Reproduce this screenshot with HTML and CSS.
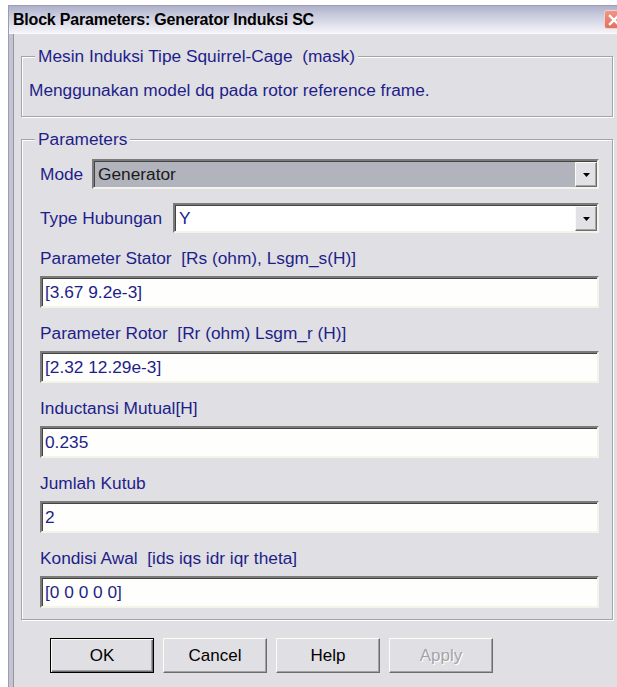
FILE: index.html
```html
<!DOCTYPE html>
<html lang="id">
<head>
<meta charset="utf-8">
<title>Block Parameters: Generator Induksi SC</title>
<link rel="stylesheet" href="styles.css">
</head>
<body>
<div class="window">
  <div class="titlebar">
    <span class="title">Block Parameters: Generator Induksi SC</span>
    <span class="close" aria-label="Close">
      <svg viewBox="0 0 12 12" width="12" height="12"><path d="M2 2 L10 10 M10 2 L2 10" stroke="#fff" stroke-width="2.4" stroke-linecap="square"/></svg>
    </span>
  </div>
  <div class="client">
    <fieldset class="group">
      <legend>Mesin Induksi Tipe Squirrel-Cage&nbsp; (mask)</legend>
      <p class="desc">Menggunakan model dq pada rotor reference frame.</p>
    </fieldset>

    <fieldset class="group params">
      <legend>Parameters</legend>
      <div class="rows">
        <div class="combo-row">
          <label class="combo-label mode-label">Mode</label>
          <div class="combo combo-grey">
            <span class="combo-text">Generator</span>
            <span class="drop"><svg viewBox="0 0 7 4" width="7" height="4"><path d="M0 0 H7 L3.5 4 Z" fill="#000"/></svg></span>
          </div>
        </div>
        <div class="combo-row">
          <label class="combo-label type-label">Type Hubungan</label>
          <div class="combo">
            <span class="combo-text value">Y</span>
            <span class="drop"><svg viewBox="0 0 7 4" width="7" height="4"><path d="M0 0 H7 L3.5 4 Z" fill="#000"/></svg></span>
          </div>
        </div>

        <div class="field">
          <label>Parameter Stator&nbsp; [Rs (ohm), Lsgm_s(H)]</label>
          <div class="edit">[3.67 9.2e-3]</div>
        </div>
        <div class="field">
          <label>Parameter Rotor&nbsp; [Rr (ohm) Lsgm_r (H)]</label>
          <div class="edit">[2.32 12.29e-3]</div>
        </div>
        <div class="field">
          <label>Inductansi Mutual[H]</label>
          <div class="edit">0.235</div>
        </div>
        <div class="field">
          <label>Jumlah Kutub</label>
          <div class="edit">2</div>
        </div>
        <div class="field">
          <label>Kondisi Awal&nbsp; [ids iqs idr iqr theta]</label>
          <div class="edit">[0 0 0 0 0]</div>
        </div>
      </div>
    </fieldset>

    <div class="buttons">
      <button class="btn btn-default">OK</button>
      <button class="btn">Cancel</button>
      <button class="btn">Help</button>
      <button class="btn" disabled>Apply</button>
    </div>
  </div>
</div>
</body>
</html>
```

FILE: styles.css
```css
html, body {
  margin: 0;
  height: 100%;
}

body {
  background: #ffffff;
  overflow: hidden;
  font-family: "Liberation Sans", Arial, sans-serif;
  font-size: 17.3px;
  color: #1e1e8a;
}

/* window frame */
.window {
  margin: 5px 0 0 8px;
  height: 682px;
  border-top: 1px solid #9c9cb2;
  border-left: 1px solid #9c9cb2;
  display: flex;
  flex-direction: column;
}

.titlebar {
  height: 27px;
  flex: none;
  padding-left: 4px;
  display: flex;
  align-items: center;
  justify-content: space-between;
  background: linear-gradient(#aeb0ca, #cdcfe0 40%, #f4f4f8);
  border-bottom: 1px solid #fbfbfd;
}

.title {
  font-weight: bold;
  font-size: 16px;
  color: #000;
  letter-spacing: -0.2px;
  padding-top: 1px;
}

.close {
  width: 18px;
  height: 17px;
  margin-right: -7px;
  border: 1px solid #f7cdc6;
  border-radius: 3px;
  background: linear-gradient(#ee9589, #e2705f);
  display: flex;
  align-items: center;
  justify-content: center;
}

.client {
  flex: 1;
  background: #e0dfe3;
  border-left: 4px solid #c4c4d0;
  box-shadow: inset 1px 0 0 #9494a6;
  padding: 12px 4px 0 8px;
}

/* etched group boxes */
.group {
  margin: 0;
  min-width: 0;
  padding: 0 7px 16px;
  border: 1px solid #a3a3ab;
  box-shadow: inset 1px 1px 0 #fff, 1px 1px 0 #fff;
}

.group legend {
  margin-left: 6px;
  padding: 0 3px;
  line-height: 20px;
  background: #e0dfe3;
}

.desc {
  margin: 14px 0 0;
  line-height: 20px;
}

.params {
  margin-top: 12px;
  padding-bottom: 11px;
}

.rows {
  padding: 0 6px 0 11px;
}

/* combo boxes */
.combo-row {
  display: flex;
  align-items: center;
  height: 30px;
  margin-top: 10px;
}

.combo-row + .combo-row {
  margin-top: 14px;
}

.combo-label {
  flex: none;
}

.mode-label { width: 52px; }
.type-label { width: 133px; }

.combo {
  flex: 1;
  height: 30px;
  box-sizing: border-box;
  display: flex;
  align-items: stretch;
  background: #fff;
  border: 2px solid;
  border-color: #7b7b7b #f4f4ec #f4f4ec #7b7b7b;
  box-shadow: inset 1px 1px 0 #444;
}

.combo-grey {
  background: #b1b3bd;
}

.combo-text {
  flex: 1;
  display: flex;
  align-items: center;
  padding-left: 4px;
  color: #1a1a1a;
}

.combo-text.value {
  color: #1e1e8a;
}

.drop {
  width: 20px;
  flex: none;
  margin: 1px 0 0;
  display: flex;
  align-items: center;
  justify-content: center;
  background: #e2e1e5;
  border: 1px solid;
  border-color: #fafaf4 #6e6e6e #6e6e6e #fafaf4;
  box-shadow: inset -1px -1px 0 #a4a4a4;
}

/* labelled edit fields */
.field {
  margin-top: 14px;
}

.combo-row + .field {
  margin-top: 14px;
}

.field label {
  display: block;
  line-height: 22px;
}

.edit {
  margin-top: 7px;
  height: 32px;
  box-sizing: border-box;
  padding-left: 3px;
  display: flex;
  align-items: center;
  background: #fefefc;
  border: 2px solid;
  border-color: #7b7b7b #f4f4e8 #f4f4e8 #7b7b7b;
  box-shadow: inset 1px 1px 0 #444;
}

/* dialog buttons */
.buttons {
  display: flex;
  gap: 9px;
  padding: 18px 0 0 29px;
}

.btn {
  width: 104px;
  height: 35px;
  padding: 0;
  font-family: "Liberation Sans", Arial, sans-serif;
  font-size: 17px;
  color: #000;
  background: #e0dfe3;
  border: 1px solid;
  border-color: #fdfdf6 #6c6c6c #6c6c6c #fdfdf6;
  box-shadow: inset -1px -1px 0 #a2a2a2;
}

.btn-default {
  border: 1px solid #000;
  box-shadow: inset 1px 1px 0 #fdfdf6, inset -1px -1px 0 #6c6c6c, inset -2px -2px 0 #a2a2a2;
}

.btn:disabled {
  color: #a4a4a8;
  text-shadow: 1px 1px 0 #fff;
}
```
